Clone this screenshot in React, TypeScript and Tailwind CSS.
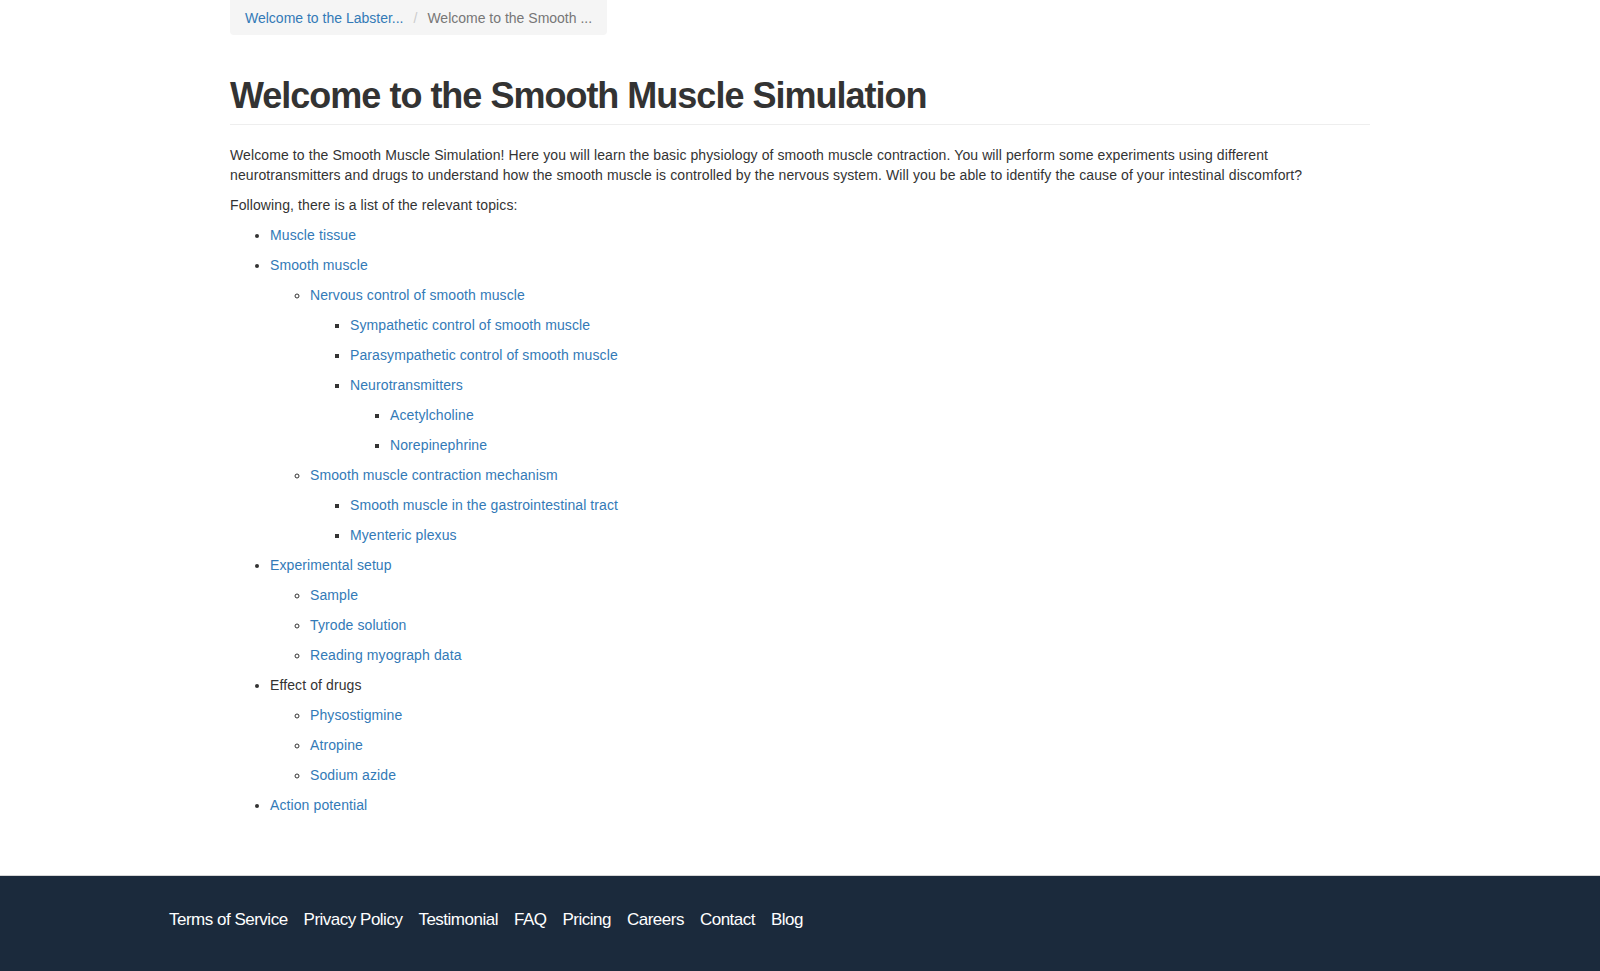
import React from 'react';

type Topic = {
  label: string;
  link?: boolean;
  children?: Topic[];
};

const topics: Topic[] = [
  { label: 'Muscle tissue', link: true },
  {
    label: 'Smooth muscle',
    link: true,
    children: [
      {
        label: 'Nervous control of smooth muscle',
        link: true,
        children: [
          { label: 'Sympathetic control of smooth muscle', link: true },
          { label: 'Parasympathetic control of smooth muscle', link: true },
          {
            label: 'Neurotransmitters',
            link: true,
            children: [
              { label: 'Acetylcholine', link: true },
              { label: 'Norepinephrine', link: true },
            ],
          },
        ],
      },
      {
        label: 'Smooth muscle contraction mechanism',
        link: true,
        children: [
          { label: 'Smooth muscle in the gastrointestinal tract', link: true },
          { label: 'Myenteric plexus', link: true },
        ],
      },
    ],
  },
  {
    label: 'Experimental setup',
    link: true,
    children: [
      { label: 'Sample', link: true },
      { label: 'Tyrode solution', link: true },
      { label: 'Reading myograph data', link: true },
    ],
  },
  {
    label: 'Effect of drugs',
    children: [
      { label: 'Physostigmine', link: true },
      { label: 'Atropine', link: true },
      { label: 'Sodium azide', link: true },
    ],
  },
  { label: 'Action potential', link: true },
];

// bullet style per nesting depth, same as the browser default
const bulletClass = ['list-disc', 'list-[circle]', 'list-[square]', 'list-[square]'];

const footerLinks = ['Terms of Service', 'Privacy Policy', 'Testimonial', 'FAQ', 'Pricing', 'Careers', 'Contact', 'Blog'];

const TopicList: React.FC<{ items: Topic[]; depth: number }> = ({ items, depth }) => (
  <ul className={`pl-10 ${bulletClass[Math.min(depth, 3)]} marker:text-[#333]`}>
    {items.map((item) => (
      <li key={item.label}>
        <div className="mb-[10px] leading-5">
          {item.link ? (
            <a href="#" className="text-[#337ab7] no-underline">
              {item.label}
            </a>
          ) : (
            <span>{item.label}</span>
          )}
        </div>
        {item.children && <TopicList items={item.children} depth={depth + 1} />}
      </li>
    ))}
  </ul>
);

export default function App() {
  return (
    <div className="min-h-[971px] bg-white text-[14px] leading-5 tracking-[0.1px] text-[#333] font-['Liberation_Sans','Helvetica_Neue',Arial,sans-serif]">
      <div className="mx-auto w-[1170px] px-[15px] pb-[50px]">
        {/* breadcrumb */}
        <div className="flex w-fit items-center whitespace-nowrap rounded-b-[4px] bg-[#f5f5f5] px-[15px] h-[35px] tracking-normal">
          <a href="#" className="text-[#337ab7]">Welcome to the Labster...</a>
          <span className="px-[10px] text-[#ccc]">/</span>
          <span className="text-[#777]">Welcome to the Smooth ...</span>
        </div>

        {/* page header */}
        <div className="mt-[40px] mb-5 border-b border-[#eee] pb-[8px]">
          <h1 className="pt-[1px] text-[36px] leading-[40px] font-bold tracking-[-1px] text-[#333]">
            Welcome to the Smooth Muscle Simulation
          </h1>
        </div>

        <p className="mb-[10px]">
          Welcome to the Smooth Muscle Simulation! Here you will learn the basic physiology of smooth muscle contraction. You will perform some experiments using different neurotransmitters and drugs to understand how the smooth muscle is controlled by the nervous system. Will you be able to identify the cause of your intestinal discomfort?
        </p>
        <p className="mb-[10px]">Following, there is a list of the relevant topics:</p>

        <TopicList items={topics} depth={0} />
      </div>

      <footer className="border-t border-[#d6d6d6] bg-[#1b2a3c] h-[96px]">
        <div className="flex h-[86px] items-center gap-[16px] pl-[169px] pt-[2px] text-[17px] tracking-[-0.5px] text-white">
          {footerLinks.map((l) => (
            <a key={l} href="#" className="text-white">
              {l}
            </a>
          ))}
        </div>
      </footer>
    </div>
  );
}
